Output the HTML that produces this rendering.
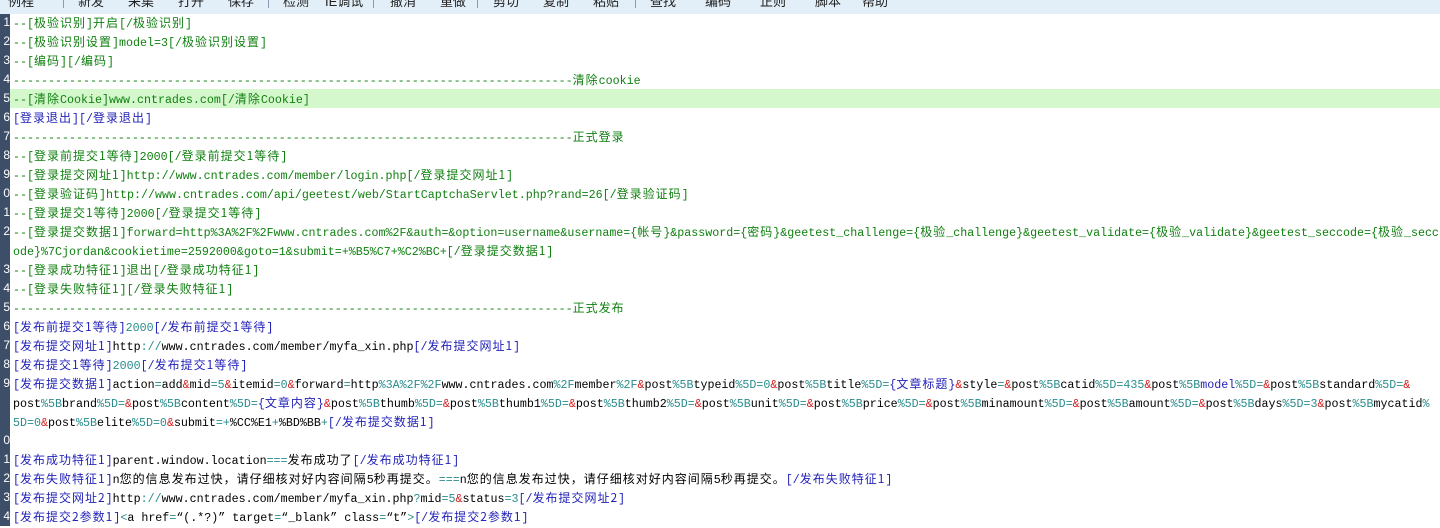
<!DOCTYPE html>
<html><head><meta charset="utf-8"><style>
body{margin:0;width:1440px;height:526px;overflow:hidden;background:#fff;position:relative;font-family:"Liberation Mono","Noto Sans CJK SC",monospace;font-size:11.67px}
#tb{position:absolute;left:0;top:0;width:1440px;height:14px;background:#e2eff8;overflow:hidden}
#tb span{position:absolute;top:-9px;font-family:"Liberation Sans","Noto Sans CJK SC",sans-serif;font-size:13px;color:#222;white-space:nowrap}
#tb i{position:absolute;top:0;width:1px;height:8px;background:#8a9bb0}
#gut{position:absolute;left:0;top:14px;width:10px;height:512px;background:#3d4e69}
.n{position:absolute;left:0;width:10px;text-align:right;color:#fff;font-family:"Liberation Sans",sans-serif;font-size:12px;line-height:19px;overflow:hidden}
.l{position:absolute;left:13px;height:19px;line-height:19px;white-space:nowrap;color:#000}
.hl{position:absolute;left:10px;width:1430px;height:19px;background:#d4f8cc}
.k{font-family:"Noto Sans CJK SC",sans-serif;font-size:12px;letter-spacing:1px}
.g{color:#118011}.t{color:#2323b8}.c{color:#2a8c8c}.r{color:#d42020}
</style></head><body>
<div id="tb">
<span style="left:8px">例程</span><i style="left:63px"></i>
<span style="left:78px">新发</span><span style="left:128px">采集</span><span style="left:178px">打开</span><span style="left:228px">保存</span><i style="left:268px"></i>
<span style="left:283px">检测</span><span style="left:325px">IE调试</span><i style="left:373px"></i>
<span style="left:390px">撤消</span><span style="left:440px">重做</span><i style="left:477px"></i>
<span style="left:493px">剪切</span><span style="left:543px">复制</span><span style="left:593px">粘贴</span><i style="left:635px"></i>
<span style="left:650px">查找</span><span style="left:705px">编码</span><span style="left:760px">正则</span><span style="left:815px">脚本</span><span style="left:862px">帮助</span>
</div>
<div id="gut"></div>
<div class="hl" style="top:89px"></div>

<div class="n" style="top:13px">1</div><div class="n" style="top:32px">2</div><div class="n" style="top:51px">3</div><div class="n" style="top:70px">4</div><div class="n" style="top:89px">5</div><div class="n" style="top:108px">6</div><div class="n" style="top:127px">7</div><div class="n" style="top:146px">8</div><div class="n" style="top:165px">9</div><div class="n" style="top:184px">0</div><div class="n" style="top:203px">1</div><div class="n" style="top:222px">2</div><div class="n" style="top:260px">3</div><div class="n" style="top:279px">4</div><div class="n" style="top:298px">5</div><div class="n" style="top:317px">6</div><div class="n" style="top:336px">7</div><div class="n" style="top:355px">8</div><div class="n" style="top:374px">9</div><div class="n" style="top:431px">0</div><div class="n" style="top:450px">1</div><div class="n" style="top:469px">2</div><div class="n" style="top:488px">3</div><div class="n" style="top:507px">4</div>

<div class="l g" style="top:13px">--[<span class="k">极验识别</span>]<span class="k">开启</span>[/<span class="k">极验识别</span>]</div>
<div class="l g" style="top:32px">--[<span class="k">极验识别设置</span>]model=3[/<span class="k">极验识别设置</span>]</div>
<div class="l g" style="top:51px">--[<span class="k">编码</span>][/<span class="k">编码</span>]</div>
<div class="l g" style="top:70px">--------------------------------------------------------------------------------<span class="k">清除</span>cookie</div>
<div class="l g" style="top:89px">--[<span class="k">清除</span>Cookie]www.cntrades.com[/<span class="k">清除</span>Cookie]</div>
<div class="l t" style="top:108px">[<span class="k">登录退出</span>][/<span class="k">登录退出</span>]</div>
<div class="l g" style="top:127px">--------------------------------------------------------------------------------<span class="k">正式登录</span></div>
<div class="l g" style="top:146px">--[<span class="k">登录前提交1等待</span>]2000[/<span class="k">登录前提交1等待</span>]</div>
<div class="l g" style="top:165px">--[<span class="k">登录提交网址1</span>]http://www.cntrades.com/member/login.php[/<span class="k">登录提交网址1</span>]</div>
<div class="l g" style="top:184px">--[<span class="k">登录验证码</span>]http://www.cntrades.com/api/geetest/web/StartCaptchaServlet.php?rand=26[/<span class="k">登录验证码</span>]</div>
<div class="l g" style="top:203px">--[<span class="k">登录提交1等待</span>]2000[/<span class="k">登录提交1等待</span>]</div>
<div class="l g" style="top:222px">--[<span class="k">登录提交数据1</span>]forward=http%3A%2F%2Fwww.cntrades.com%2F&amp;auth=&amp;option=username&amp;username={<span class="k">帐号</span>}&amp;password={<span class="k">密码</span>}&amp;geetest_challenge={<span class="k">极验</span>_challenge}&amp;geetest_validate={<span class="k">极验</span>_validate}&amp;geetest_seccode={<span class="k">极验</span>_secc</div>
<div class="l g" style="top:241px">ode}%7Cjordan&amp;cookietime=2592000&amp;goto=1&amp;submit=+%B5%C7+%C2%BC+[/<span class="k">登录提交数据1</span>]</div>
<div class="l g" style="top:260px">--[<span class="k">登录成功特征1</span>]<span class="k">退出</span>[/<span class="k">登录成功特征1</span>]</div>
<div class="l g" style="top:279px">--[<span class="k">登录失败特征1</span>][/<span class="k">登录失败特征1</span>]</div>
<div class="l g" style="top:298px">--------------------------------------------------------------------------------<span class="k">正式发布</span></div>
<div class="l" style="top:317px"><span class="t">[<span class="k">发布前提交1等待</span>]</span><span class="c">2000</span><span class="t">[/<span class="k">发布前提交1等待</span>]</span></div>
<div class="l" style="top:336px"><span class="t">[<span class="k">发布提交网址1</span>]</span>http<span class="c">://</span>www.cntrades.com/member/myfa_xin.php<span class="t">[/<span class="k">发布提交网址1</span>]</span></div>
<div class="l" style="top:355px"><span class="t">[<span class="k">发布提交1等待</span>]</span><span class="c">2000</span><span class="t">[/<span class="k">发布提交1等待</span>]</span></div>
<div class="l" style="top:374px"><span class="t">[<span class="k">发布提交数据1</span>]</span>action<span class="c">=</span>add<span class="r">&amp;</span>mid<span class="c">=5</span><span class="r">&amp;</span>itemid<span class="c">=0</span><span class="r">&amp;</span>forward<span class="c">=</span>http<span class="c">%3A%2F%2F</span>www.cntrades.com<span class="c">%2F</span>member<span class="c">%2F</span><span class="r">&amp;</span>post<span class="c">%5B</span>typeid<span class="c">%5D=0</span><span class="r">&amp;</span>post<span class="c">%5B</span>title<span class="c">%5D=</span><span class="t">{<span class="k">文章标题</span>}</span><span class="r">&amp;</span>style<span class="c">=</span><span class="r">&amp;</span>post<span class="c">%5B</span>catid<span class="c">%5D=435</span><span class="r">&amp;</span>post<span class="c">%5B</span><span class="t">model</span><span class="c">%5D=</span><span class="r">&amp;</span>post<span class="c">%5B</span>standard<span class="c">%5D=</span><span class="r">&amp;</span></div>
<div class="l" style="top:393px">post<span class="c">%5B</span>brand<span class="c">%5D=</span><span class="r">&amp;</span>post<span class="c">%5B</span>content<span class="c">%5D=</span><span class="t">{<span class="k">文章内容</span>}</span><span class="r">&amp;</span>post<span class="c">%5B</span>thumb<span class="c">%5D=</span><span class="r">&amp;</span>post<span class="c">%5B</span>thumb1<span class="c">%5D=</span><span class="r">&amp;</span>post<span class="c">%5B</span>thumb2<span class="c">%5D=</span><span class="r">&amp;</span>post<span class="c">%5B</span>unit<span class="c">%5D=</span><span class="r">&amp;</span>post<span class="c">%5B</span>price<span class="c">%5D=</span><span class="r">&amp;</span>post<span class="c">%5B</span>minamount<span class="c">%5D=</span><span class="r">&amp;</span>post<span class="c">%5B</span>amount<span class="c">%5D=</span><span class="r">&amp;</span>post<span class="c">%5B</span>days<span class="c">%5D=3</span><span class="r">&amp;</span>post<span class="c">%5B</span>mycatid<span class="c">%</span></div>
<div class="l" style="top:412px"><span class="c">5D=0</span><span class="r">&amp;</span>post<span class="c">%5B</span>elite<span class="c">%5D=0</span><span class="r">&amp;</span>submit<span class="c">=+</span>%CC%E1<span class="c">+</span>%BD%BB<span class="c">+</span><span class="t">[/<span class="k">发布提交数据1</span>]</span></div>
<div class="l" style="top:450px"><span class="t">[<span class="k">发布成功特征1</span>]</span>parent.window.location<span class="c">===</span><span class="k">发布成功了</span><span class="t">[/<span class="k">发布成功特征1</span>]</span></div>
<div class="l" style="top:469px"><span class="t">[<span class="k">发布失败特征1</span>]</span>n<span class="k">您的信息发布过快，请仔细核对好内容间隔</span>5<span class="k">秒再提交。</span><span class="c">===</span>n<span class="k">您的信息发布过快，请仔细核对好内容间隔</span>5<span class="k">秒再提交。</span><span class="t">[/<span class="k">发布失败特征1</span>]</span></div>
<div class="l" style="top:488px"><span class="t">[<span class="k">发布提交网址2</span>]</span>http<span class="c">://</span>www.cntrades.com/member/myfa_xin.php<span class="c">?</span>mid<span class="c">=5</span><span class="r">&amp;</span>status<span class="c">=3</span><span class="t">[/<span class="k">发布提交网址2</span>]</span></div>
<div class="l" style="top:507px"><span class="t">[<span class="k">发布提交2参数1</span>]</span><span class="c">&lt;</span>a href<span class="c">=</span>“(.*?)” target<span class="c">=</span>“_blank” class<span class="c">=</span>“t”<span class="c">&gt;</span><span class="t">[/<span class="k">发布提交2参数1</span>]</span></div>
</body></html>
